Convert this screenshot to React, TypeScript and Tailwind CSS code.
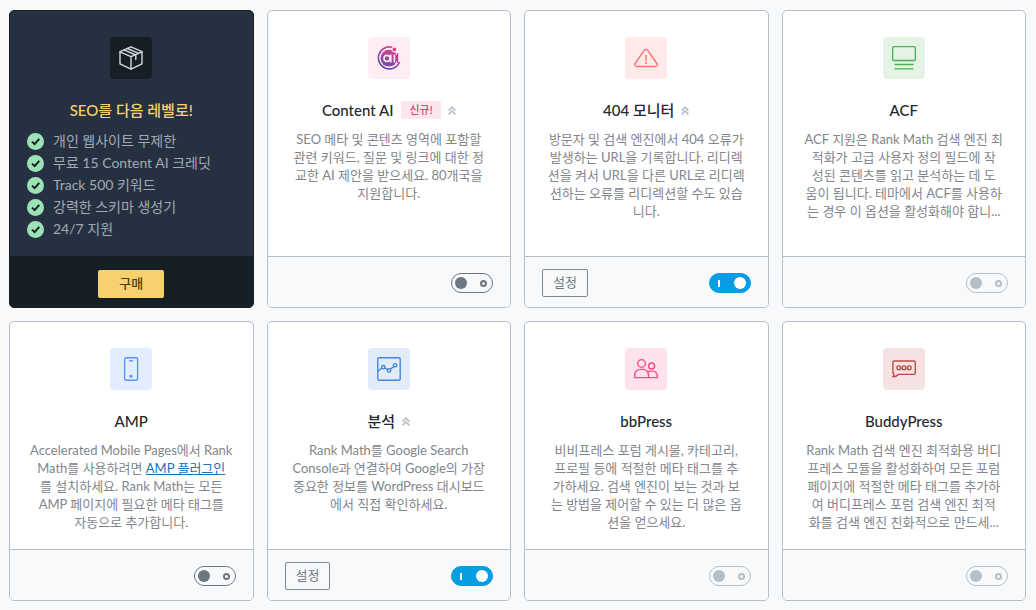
import React, { useState } from "react";

type Module = {
    id: string;
    title: string;
    desc: React.ReactNode;
    icon: React.ReactNode;
    iconBg: string;
    isNew?: boolean;
    upgradeable?: boolean;
    settings?: boolean;
    enabled?: boolean;
    disabled?: boolean;
};

const PRO_FEATURES = [
    "개인 웹사이트 무제한",
    "무료 15 Content AI 크레딧",
    "Track 500 키워드",
    "강력한 스키마 생성기",
    "24/7 지원",
];

const PackageIcon = () => (
    <svg className="size-6" viewBox="0 0 24 24" fill="none" stroke="#d5d8dc" strokeWidth="1.4" strokeLinejoin="round" strokeLinecap="round">
        <path d="M12 .8 23 5.6V17.8L12 23.2 1 17.8V5.6Z" />
        <path d="M1 5.8 12 10.6 23 5.8M12 10.6V23" />
        <path d="M5 3.9 16.8 9V13.6M8.4 2.5 19.6 7.4" />
    </svg>
);

const ContentAiIcon = () => (
    <svg className="size-6" viewBox="0 0 24 24" fill="none">
        <defs>
            <linearGradient id="ai-gradient" x1="18" y1="1" x2="7" y2="23" gradientUnits="userSpaceOnUse">
                <stop stopColor="#ee3f86" />
                <stop offset="1" stopColor="#5a4bb5" />
            </linearGradient>
        </defs>
        <path d="M15.4 1.3A11 11 0 1 0 22.6 16" stroke="url(#ai-gradient)" strokeWidth="1.6" />
        <circle cx="12" cy="12.2" r="8.4" fill="url(#ai-gradient)" />
        <circle cx="10" cy="12.4" r="3" stroke="#fdecf2" strokeWidth="1.6" />
        <path d="M13.8 8.4V16.4M17.4 8.4V16.4" stroke="#fdecf2" strokeWidth="1.6" />
        <circle cx="17.4" cy="3.4" r="2.8" fill="#feeef4" />
        <circle cx="17.4" cy="3.4" r="1.9" fill="#e63e86" />
        <path d="M20.6 7V17" stroke="#c23f93" strokeWidth="1.3" />
    </svg>
);

const WarningIcon = () => (
    <svg className="size-6" viewBox="0 0 24 24" fill="none" stroke="#ff7070" strokeWidth="1.4" strokeLinecap="round">
        <path d="M10.2 4.4a2.1 2.1 0 0 1 3.6 0l9 13.1a1.9 1.9 0 0 1-1.6 3H2.8a1.9 1.9 0 0 1-1.6-3Z" />
        <path d="M12 9.4v5" />
        <circle cx="12" cy="17" r=".4" fill="#ff7070" />
    </svg>
);

const AcfIcon = () => (
    <svg className="size-6" viewBox="0 0 24 24" fill="none" stroke="#4caf50" strokeWidth="1.3" strokeLinecap="round">
        <rect x=".7" y=".7" width="22.6" height="13.8" rx="1.2" />
        <path d="M3 18.5h18M3 22.8h18" />
    </svg>
);

const PhoneIcon = () => (
    <svg className="size-6" viewBox="0 0 24 24" fill="none" stroke="#5c93fb" strokeWidth="1.4" strokeLinecap="round">
        <rect x="5.6" y=".8" width="13" height="22.4" rx="1.4" />
        <path d="M10.8 3.8h2.6" />
        <circle cx="12" cy="19.2" r=".9" fill="#5c93fb" />
    </svg>
);

const AnalyticsIcon = () => (
    <svg className="size-6" viewBox="0 0 24 24" fill="none" stroke="#4487db" strokeWidth="1.4">
        <rect x=".8" y=".8" width="22.4" height="22.4" rx="1.2" />
        <path d="M1 14.2 4.7 11.2M7.9 10.8 10.2 12.4M13.5 12.2 16.6 9.4" />
        <circle cx="6.2" cy="10.2" r="1.7" />
        <circle cx="12" cy="13.4" r="1.7" />
        <circle cx="18.1" cy="8.3" r="1.7" />
    </svg>
);

const UsersIcon = () => (
    <svg className="size-6" viewBox="0 0 24 24" fill="none" stroke="#fd4a86" strokeWidth="1.4" strokeLinejoin="round">
        <circle cx="7.6" cy="6.4" r="3.8" />
        <circle cx="17.6" cy="9" r="3" />
        <path d="M.7 20.6V18a5.6 5.6 0 0 1 5.6-5.6h2.6a5.6 5.6 0 0 1 5.6 5.6v2.6Z" />
        <path d="M13.6 14.9a5 5 0 0 1 2.6-.8h2.4a4.7 4.7 0 0 1 4.7 4.7v1.8h-8.8" />
    </svg>
);

const ChatIcon = () => (
    <svg className="size-6" viewBox="0 0 24 24" fill="none" stroke="#bf4a48" strokeWidth="1.4" strokeLinejoin="round">
        <path d="M2 4h20.2a1.1 1.1 0 0 1 1.1 1.1v11.2a1.1 1.1 0 0 1-1.1 1.1H6.4C5 18.8 3.2 19.7.9 19.7c.8-.9 1-1.7 1-2.7L.9 15.8V5.1A1.1 1.1 0 0 1 2 4Z" />
        <circle cx="6.8" cy="10.8" r="1.9" />
        <circle cx="12" cy="10.8" r="1.9" />
        <circle cx="17.2" cy="10.8" r="1.9" />
    </svg>
);

const UpgradeIcon = () => (
    <svg className="ml-[7px] h-[9px] w-2" viewBox="0 0 8 9" fill="none" stroke="#b5bfc9" strokeWidth="1.6">
        <path d="M.6 4.6 4 1.2 7.4 4.6M.6 8.4 4 5 7.4 8.4" />
    </svg>
);

const MODULES: Module[] = [
    {
        id: "content-ai",
        title: "Content AI",
        desc: "SEO 메타 및 콘텐츠 영역에 포함할\n관련 키워드, 질문 및 링크에 대한 정\n교한 AI 제안을 받으세요. 80개국을\n지원합니다.",
        icon: <ContentAiIcon />,
        iconBg: "bg-[#feeef4]",
        isNew: true,
        upgradeable: true,
    },
    {
        id: "404-monitor",
        title: "404 모니터",
        desc: "방문자 및 검색 엔진에서 404 오류가\n발생하는 URL을 기록합니다. 리디렉\n션을 켜서 URL을 다른 URL로 리디렉\n션하는 오류를 리디렉션할 수도 있습\n니다.",
        icon: <WarningIcon />,
        iconBg: "bg-[#ffe9e9]",
        upgradeable: true,
        settings: true,
        enabled: true,
    },
    {
        id: "acf",
        title: "ACF",
        desc: "ACF 지원은 Rank Math 검색 엔진 최\n적화가 고급 사용자 정의 필드에 작\n성된 콘텐츠를 읽고 분석하는 데 도\n움이 됩니다. 테마에서 ACF를 사용하\n는 경우 이 옵션을 활성화해야 합니...",
        icon: <AcfIcon />,
        iconBg: "bg-[#e4f3e5]",
        disabled: true,
    },
    {
        id: "amp",
        title: "AMP",
        desc: (
            <>
                {"Accelerated Mobile Pages에서 Rank\nMath를 사용하려면 "}
                <a href="#amp" className="inline-block text-[#2271b1] underline">AMP 플러그인</a>
                {"\n를 설치하세요. Rank Math는 모든\nAMP 페이지에 필요한 메타 태그를\n자동으로 추가합니다."}
            </>
        ),
        icon: <PhoneIcon />,
        iconBg: "bg-[#e2edff]",
    },
    {
        id: "analytics",
        title: "분석",
        desc: "Rank Math를 Google Search\nConsole과 연결하여 Google의 가장\n중요한 정보를 WordPress 대시보드\n에서 직접 확인하세요.",
        icon: <AnalyticsIcon />,
        iconBg: "bg-[#e2ecf9]",
        upgradeable: true,
        settings: true,
        enabled: true,
    },
    {
        id: "bbpress",
        title: "bbPress",
        desc: "비비프레스 포럼 게시물, 카테고리,\n프로필 등에 적절한 메타 태그를 추\n가하세요. 검색 엔진이 보는 것과 보\n는 방법을 제어할 수 있는 더 많은 옵\n션을 얻으세요.",
        icon: <UsersIcon />,
        iconBg: "bg-[#ffe2ec]",
        disabled: true,
    },
    {
        id: "buddypress",
        title: "BuddyPress",
        desc: "Rank Math 검색 엔진 최적화용 버디\n프레스 모듈을 활성화하여 모든 포럼\n페이지에 적절한 메타 태그를 추가하\n여 버디프레스 포럼 검색 엔진 최적\n화를 검색 엔진 친화적으로 만드세...",
        icon: <ChatIcon />,
        iconBg: "bg-[#f5e2e3]",
        disabled: true,
    },
];

function Toggle({ label, initial, disabled }: { label: string; initial?: boolean; disabled?: boolean }) {
    const [on, setOn] = useState(!!initial);
    let track = "pl-[3px] pr-[5px] border-[#6c7781] text-[#6c7781]";
    if (on) track = "flex-row-reverse pl-2 pr-1 border-[#069de3] bg-[#069de3] text-white";
    if (disabled) track = "pl-[3px] pr-[5px] border-[#b5bfc9] text-[#b5bfc9]";

    return (
        <label className="relative flex">
            <input
                type="checkbox"
                aria-label={label}
                checked={on}
                disabled={disabled}
                onChange={(e) => setOn(e.target.checked)}
                className="sr-only"
            />
            <span className={`flex h-5 w-[42px] items-center justify-between rounded-full border ${track}`}>
                <span className="size-3 rounded-full bg-current" />
                {on
                    ? <span className="h-[7px] w-[2px] bg-current" />
                    : <span className="size-[7px] rounded-full border-2 border-current" />}
            </span>
        </label>
    );
}

function ProCard() {
    return (
        <section className="flex flex-col overflow-hidden rounded-[5px] border border-[#161e26] bg-[#253041]">
            <div className="flex-1 px-[17px] pt-[26px] pb-4">
                <div className="mx-auto flex size-[42px] items-center justify-center rounded bg-[#161e26]">
                    <PackageIcon />
                </div>
                <h3 className="mt-5 mb-[9px] text-center text-[15px] leading-[22px] font-medium text-[#f7d070]">SEO를 다음 레벨로!</h3>
                <ul>
                    {PRO_FEATURES.map((feature) => (
                        <li key={feature} className="flex items-center gap-[9px] text-sm leading-[22px] text-[#a3a9b2]">
                            <svg className="size-[17px]" viewBox="0 0 17 17" fill="none">
                                <circle cx="8.5" cy="8.5" r="8.5" fill="#9ce2b6" />
                                <path d="m5 8.6 2.6 2.5L12.3 5.9" stroke="#161e26" strokeWidth="2" />
                            </svg>
                            {feature}
                        </li>
                    ))}
                </ul>
            </div>
            <div className="flex h-[51px] items-center justify-center bg-[#161e26] pt-1">
                <button className="h-7 rounded-xs bg-[#f7d070] px-[21px] text-[13px] font-medium text-[#513c06]">구매</button>
            </div>
        </section>
    );
}

function ModuleCard({ module }: { module: Module }) {
    return (
        <section className="flex flex-col overflow-hidden rounded-[5px] border border-[#b5bfc9] bg-white">
            <div className="flex-1 px-4 pt-[26px] pb-[18px] text-center">
                <div className={`mx-auto flex size-[42px] items-center justify-center rounded ${module.iconBg}`}>
                    {module.icon}
                </div>
                <h3 className="mt-5 mb-[9px] flex items-center justify-center text-[15px] leading-[22px] font-medium text-[#23282d]">
                    {module.title}
                    {module.isNew && (
                        <span className="ml-2 rounded-xs bg-[#fde5ed] px-2 text-[11px] leading-[18px] font-normal text-[#e01e5a]">신규!</span>
                    )}
                    {module.upgradeable && <UpgradeIcon />}
                </h3>
                <p className="text-[13px] leading-[18px] whitespace-pre-line text-[#7f868d]">{module.desc}</p>
            </div>
            <div className="flex h-[51px] items-center justify-between border-t border-[#b5bfc9] bg-[#f8f9fb] px-[17px] pt-[2px]">
                {module.settings
                    ? <button className="h-7 rounded-xs border border-[#7e8993] px-[10px] text-[13px] text-[#6c7781]">설정</button>
                    : <span />}
                <Toggle label={module.title} initial={module.enabled} disabled={module.disabled} />
            </div>
        </section>
    );
}

export default function App() {
    return (
        <main className="min-h-screen bg-[#f8f9fb] pt-[10px] pr-[10px] pb-2 pl-[9px] font-['Lato','Noto_Sans_CJK_KR',sans-serif]">
            <div className="grid grid-cols-4 gap-[13px]">
                <ProCard />
                {MODULES.map((module) => (
                    <ModuleCard key={module.id} module={module} />
                ))}
            </div>
        </main>
    );
}
